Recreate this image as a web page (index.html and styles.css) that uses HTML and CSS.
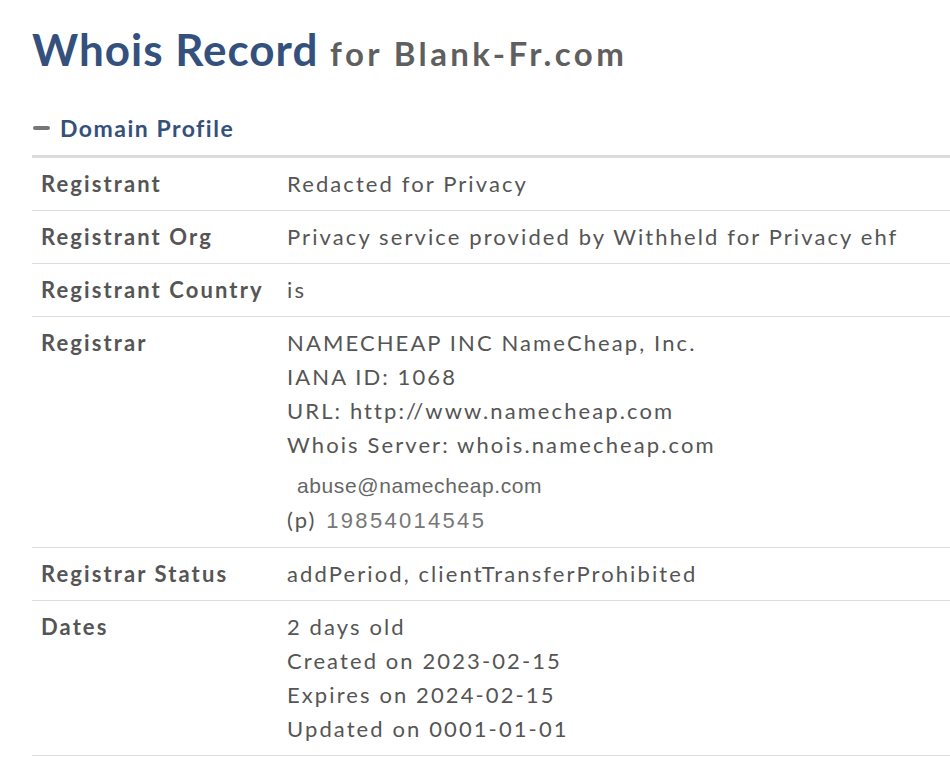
FILE: index.html
```html
<!DOCTYPE html>
<html lang="en">
<head>
<meta charset="utf-8">
<title>Whois Record for Blank-Fr.com</title>
<link rel="stylesheet" href="styles.css">
</head>
<body>
<div class="page">
  <h1 class="title">Whois Record <span class="title-domain">for Blank-Fr.com</span></h1>
  <h2 class="section-head"><span class="minus"></span>Domain Profile</h2>
  <table class="profile">
    <tr><td class="label">Registrant</td><td class="value">Redacted for Privacy</td></tr>
    <tr><td class="label">Registrant Org</td><td class="value">Privacy service provided by Withheld for Privacy ehf</td></tr>
    <tr><td class="label">Registrant Country</td><td class="value">is</td></tr>
    <tr><td class="label">Registrar</td><td class="value">
      <div>NAMECHEAP INC NameCheap, Inc.</div>
      <div>IANA ID: 1068</div>
      <div>URL: http://www.namecheap.com</div>
      <div>Whois Server: whois.namecheap.com</div>
      <div class="email-line"><span class="img-text">abuse@namecheap.com</span></div>
      <div class="phone-line">(p) <span class="img-text phone">19854014545</span></div>
    </td></tr>
    <tr><td class="label">Registrar Status</td><td class="value">addPeriod, clientTransferProhibited</td></tr>
    <tr><td class="label">Dates</td><td class="value">
      <div>2 days old</div>
      <div>Created on 2023-02-15</div>
      <div>Expires on 2024-02-15</div>
      <div>Updated on 0001-01-01</div>
    </td></tr>
  </table>
</div>
</body>
</html>
```

FILE: styles.css
```css
html, body {
  margin: 0;
  padding: 0;
  background: #fff;
}
body {
  font-family: Lato, "Open Sans", sans-serif;
  color: #555;
}
.page {
  padding: 22px 0 0 32px;
}
.title {
  margin: 0;
  font-size: 44px;
  font-weight: 700;
  line-height: 54px;
  color: #34507c;
  letter-spacing: 1px;
}
.title-domain {
  font-size: 33px;
  color: #5f5f5f;
  letter-spacing: 3.4px;
}
.section-head {
  margin: 35px 0 0 0;
  display: flex;
  align-items: center;
  font-size: 23px;
  font-weight: 700;
  color: #34507c;
  line-height: 26px;
  letter-spacing: 1.5px;
}
.minus {
  display: inline-block;
  width: 17px;
  height: 4px;
  border-radius: 2px;
  background: #777;
  margin: 0 10px 0 1px;
}
.profile {
  margin-top: 14px;
  width: 100%;
  border-collapse: collapse;
  border-top: 3px solid #dcdcdc;
  font-size: 22px;
  letter-spacing: 2.1px;
}
.profile td {
  vertical-align: top;
  padding: 9px;
  line-height: 34px;
  border-bottom: 1px solid #dcdcdc;
}
.label {
  width: 228px;
  font-weight: 700;
  white-space: nowrap;
  color: #555;
}
.value {
  color: #555;
}
.email-line {
  padding-top: 6px;
  line-height: 34px;
}
.img-text {
  font-family: "Liberation Sans", Arial, sans-serif;
  color: #666;
  letter-spacing: 0.6px;
  font-size: 21px;
  padding-left: 10px;
}
.phone {
  font-size: 22px;
  padding-left: 2px;
  letter-spacing: 2.3px;
  color: #777;
}
.phone-line {
  line-height: 34px;
}
```
